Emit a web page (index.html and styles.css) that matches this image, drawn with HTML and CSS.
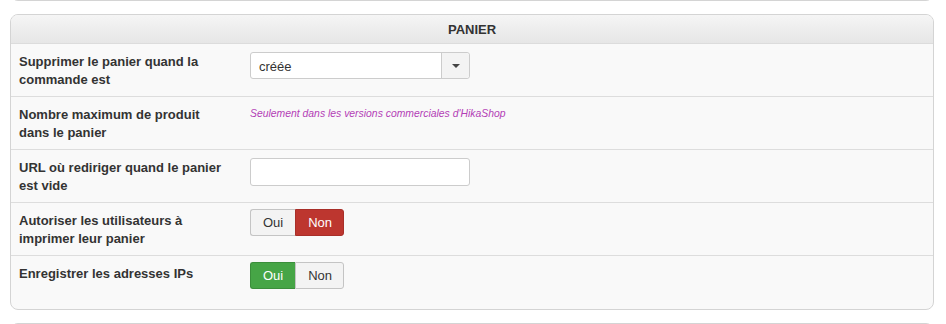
FILE: index.html
```html
<!DOCTYPE html>
<html lang="fr">
<head>
    <meta charset="UTF-8">
    <title>Configuration - Panier</title>
    <link rel="stylesheet" href="styles.css">
</head>
<body>
    <div class="panel panel-prev"></div>

    <div class="panel">
        <div class="panel-title">PANIER</div>

        <div class="row">
            <div class="label">Supprimer le panier quand la commande est</div>
            <div class="field">
                <div class="select">
                    <span class="select-value">créée</span>
                    <span class="select-arrow"><b></b></span>
                </div>
            </div>
        </div>

        <div class="row">
            <div class="label">Nombre maximum de produit dans le panier</div>
            <div class="field">
                <span class="paid-only">Seulement dans les versions commerciales d'HikaShop</span>
            </div>
        </div>

        <div class="row">
            <div class="label">URL où rediriger quand le panier est vide</div>
            <div class="field">
                <input class="text-input" type="text" value="">
            </div>
        </div>

        <div class="row">
            <div class="label">Autoriser les utilisateurs à imprimer leur panier</div>
            <div class="field">
                <div class="btn-group">
                    <span class="btn">Oui</span>
                    <span class="btn btn-danger">Non</span>
                </div>
            </div>
        </div>

        <div class="row row-last">
            <div class="label">Enregistrer les adresses IPs</div>
            <div class="field">
                <div class="btn-group">
                    <span class="btn btn-success">Oui</span>
                    <span class="btn">Non</span>
                </div>
            </div>
        </div>
    </div>

    <div class="panel panel-next"></div>
</body>
</html>
```

FILE: styles.css
```css
* {
    box-sizing: border-box;
}

body {
    margin: 0;
    padding: 0 12px 0 10px;
    background: #fff;
    font-family: "Liberation Sans", Arial, Helvetica, sans-serif;
    font-size: 13px;
    line-height: 18px;
    color: #333;
    overflow: hidden;
}

.panel {
    background: #f9f9f9;
    border: 1px solid #d4d4d4;
    border-radius: 8px;
    margin-bottom: 13px;
}

.panel-prev {
    height: 30px;
    margin-top: -29px;
}

.panel-next {
    height: 40px;
}

.panel-title {
    height: 29px;
    line-height: 29px;
    text-align: center;
    font-weight: bold;
    font-size: 13px;
    border-radius: 7px 7px 0 0;
    background: linear-gradient(#f5f5f5, #e6e6e6);
    border-bottom: 1px solid #dcdcdc;
}

.row {
    display: grid;
    grid-template-columns: 231px 1fr;
    padding: 8px 8px 7px;
    border-bottom: 1px solid #dddddd;
    min-height: 53px;
}

.row-last {
    border-bottom: none;
}

.label {
    font-weight: bold;
    padding-top: 1px;
    padding-right: 20px;
}

.field {
    display: flex;
    align-items: flex-start;
}

.select {
    display: flex;
    width: 220px;
    height: 27px;
    background: #fff;
    border: 1px solid #ccc;
    border-radius: 3px;
}

.select-value {
    flex: 1;
    padding-left: 8px;
    line-height: 27px;
}

.select-arrow {
    width: 28px;
    display: flex;
    align-items: center;
    justify-content: center;
    background: #f3f3f3;
    border-left: 1px solid #ccc;
    border-radius: 0 3px 3px 0;
}

.select-arrow b {
    width: 0;
    height: 0;
    border-left: 4px solid transparent;
    border-right: 4px solid transparent;
    border-top: 4px solid #444;
}

.paid-only {
    font-size: 10.4px;
    font-style: italic;
    color: #b33db6;
}

.text-input {
    width: 220px;
    height: 28px;
    margin: 0;
    border: 1px solid #ccc;
    border-radius: 3px;
    background: #fff;
    font: inherit;
}

.btn-group {
    display: flex;
    margin-top: -2px;
}

.btn {
    display: block;
    height: 27px;
    line-height: 25px;
    padding: 0 12px;
    background: #f3f3f3;
    border: 1px solid #c4c4c4;
    color: #333;
}

.btn:first-child {
    border-radius: 3px 0 0 3px;
    border-right: none;
}

.btn:last-child {
    padding-right: 11px;
    border-radius: 0 3px 3px 0;
}

.btn-danger {
    background: #bd362f;
    border-color: #a82f29;
    color: #fff;
}

.btn-success {
    background: #46a546;
    border-color: #3b8e3b;
    color: #fff;
}
```
